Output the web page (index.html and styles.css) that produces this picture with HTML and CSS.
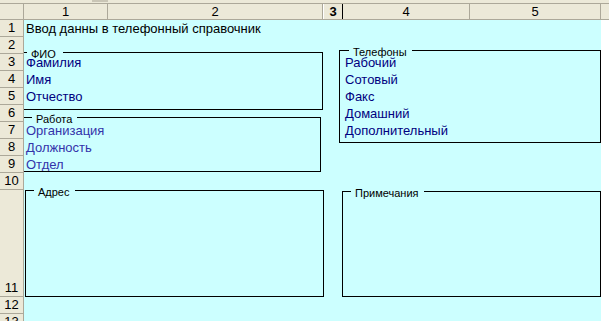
FILE: index.html
```html
<!DOCTYPE html>
<html lang="ru">
<head>
    <meta charset="UTF-8">
    <meta name="viewport" content="width=device-width, initial-scale=1.0">
    <title>Телефонный справочник</title>
    <link rel="stylesheet" href="styles.css">
</head>
<body>
    <div class="topbar"><span class="thumb"></span></div>
    <div class="colhead">
        <div class="col corner"></div>
        <div class="col k1">1</div>
        <div class="col k2">2</div>
        <div class="col k3 sel">3</div>
        <div class="col k4">4</div>
        <div class="col k5">5</div>
        <div class="col rest"></div>
    </div>
    <div class="sheet">
        <div class="rowhead">
            <div class="row">1</div>
            <div class="row">2</div>
            <div class="row">3</div>
            <div class="row">4</div>
            <div class="row">5</div>
            <div class="row">6</div>
            <div class="row">7</div>
            <div class="row">8</div>
            <div class="row">9</div>
            <div class="row">10</div>
            <div class="row tall">11</div>
            <div class="row">12</div>
            <div class="row">13</div>
        </div>
        <div class="cells">
            <div class="cell title">Ввод данны в телефонный справочник</div>

            <!-- ФИО -->
            <div class="cell navy r3">Фамилия</div>
            <div class="cell navy r4">Имя</div>
            <div class="cell navy r5">Отчество</div>

            <!-- Работа -->
            <div class="cell blue r7">Организация</div>
            <div class="cell blue r8">Должность</div>
            <div class="cell blue r9">Отдел</div>

            <!-- Телефоны -->
            <div class="cell navy r3 right">Рабочий</div>
            <div class="cell navy r4 right">Сотовый</div>
            <div class="cell navy r5 right">Факс</div>
            <div class="cell navy r6 right">Домашний</div>
            <div class="cell navy r7 right">Дополнительный</div>

            <!-- рамки -->
            <div class="frame fio"><span class="legend">ФИО</span></div>
            <div class="frame work"><span class="legend">Работа</span></div>
            <div class="frame phones"><span class="legend">Телефоны</span></div>
            <div class="frame address"><span class="legend">Адрес</span></div>
            <div class="frame notes"><span class="legend">Примечания</span></div>
        </div>
        <div class="blank"></div>
    </div>
</body>
</html>
```

FILE: styles.css
```css
html,
body {
    margin: 0;
    padding: 0;
    height: 100%;
    overflow: hidden;
    background-color: #fff;
    font-family: "Liberation Sans", Arial, sans-serif;
    color: #000;
}
/* полоска над заголовками */
.topbar {
    height: 3px;
    background-color: #ece9d8;
    border-bottom: 1px solid #aca899;
}
.topbar>.thumb {
    display: block;
    width: 16px;
    height: 2px;
    margin-left: 92px;
    background-color: #c9c5b5;
}
/* заголовки столбцов */
.colhead {
    display: flex;
    height: 16px;
    box-sizing: border-box;
    background-color: #ece9d8;
    border-bottom: 1px solid #aca899;
}
.colhead>.col {
    box-sizing: border-box;
    height: 15px;
    line-height: 15px;
    font-size: 13px;
    text-align: center;
    border-right: 1px solid #aca899;
}
.colhead>.corner {
    width: 24px;
}
.colhead>.k1 {
    width: 84px;
}
.colhead>.k2 {
    width: 215px;
}
.colhead>.k3 {
    width: 20px;
}
.colhead>.k4 {
    width: 127px;
}
.colhead>.k5 {
    width: 131px;
}
.colhead>.rest {
    flex: 1;
    border-right: none;
}
.colhead>.sel {
    font-weight: bold;
    border-left: 1px solid #fff;
    border-right: 1px solid #000;
}
/* лист */
.sheet {
    display: flex;
    height: calc(100% - 20px);
}
.rowhead {
    width: 24px;
    flex: none;
    box-sizing: border-box;
    background-color: #ece9d8;
    border-right: 1px solid #aca899;
}
.rowhead>.row {
    height: 17px;
    box-sizing: border-box;
    border-bottom: 1px solid #aca899;
    display: flex;
    align-items: flex-end;
    justify-content: center;
    font-size: 13px;
    line-height: 16px;
}
.rowhead>.tall {
    height: 107px;
}
.cells {
    width: 577px;
    flex: none;
    display: grid;
    grid-template-columns: 84px 215px 20px 127px 131px;
    grid-template-rows: repeat(10, 17px) 107px 17px 17px;
    align-content: start;
    background-color: #ccffff;
    overflow: hidden;
}
.blank {
    flex: 1;
    background-color: #fff;
}
.cell {
    grid-column: 1;
    padding-left: 2px;
    font-size: 13px;
    line-height: 17px;
    white-space: nowrap;
}
.cell.title {
    grid-row: 1;
    grid-column: 1 / 4;
}
.cell.r3 { grid-row: 3; }
.cell.r4 { grid-row: 4; }
.cell.r5 { grid-row: 5; }
.cell.r6 { grid-row: 6; }
.cell.r7 { grid-row: 7; }
.cell.r8 { grid-row: 8; }
.cell.r9 { grid-row: 9; }
.cell.right {
    grid-column: 4 / 6;
}
.navy {
    color: #000080;
}
.blue {
    color: #3333aa;
}
/* рамки-группы */
.frame {
    position: relative;
    border: 1px solid #000;
}
.frame>.legend {
    position: absolute;
    top: -3px;
    left: 8px;
    padding: 0 5px 0 4px;
    font-size: 11px;
    line-height: 9px;
    background-color: #ccffff;
    white-space: nowrap;
}
.fio {
    grid-column: 1 / 3;
    grid-row: 3 / 6;
    margin: -2px 0 -5px -2px;
}
.fio>.legend {
    left: 4px;
    padding-right: 7px;
}
.work {
    grid-column: 1 / 3;
    grid-row: 7 / 10;
    margin: -5px 2px 1px -2px;
}
.work>.legend {
    left: 9px;
}
.phones {
    grid-column: 3 / 6;
    grid-row: 3 / 8;
    margin: -4px 0 -4px 16px;
}
.phones>.legend {
    left: 9px;
}
.address {
    grid-column: 1 / 3;
    grid-row: 11;
    margin: 0 -1px 0 1px;
}
.notes {
    grid-column: 3 / 6;
    grid-row: 11;
    margin: 1px 0 0 19px;
}
```
